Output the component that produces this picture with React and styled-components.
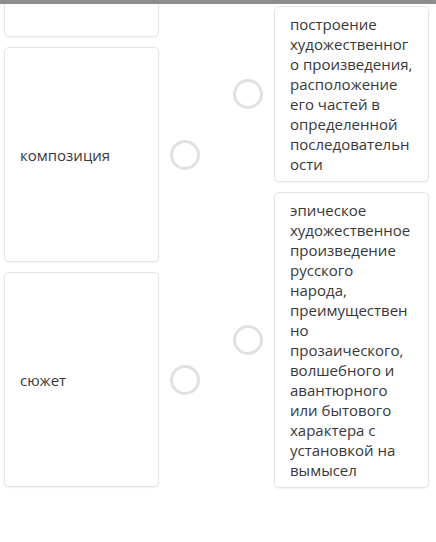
import React from "react";
import styled, { createGlobalStyle } from "styled-components";

const GlobalStyle = createGlobalStyle`
  html, body {
    margin: 0;
    padding: 0;
    background: #ffffff;
  }
  body {
    font-family: "Open Sans", "Noto Sans", sans-serif;
    -webkit-font-smoothing: antialiased;
  }
`;

const Page = styled.div`
  width: 436px;
  height: 542px;
  display: flex;
  flex-direction: column;
  overflow: hidden;
  background: #ffffff;
`;

const TopStrip = styled.div`
  height: 4px;
  flex: none;
  background: #8d8d8d;
`;

const Viewport = styled.div`
  flex: 1;
  overflow: hidden;
  display: grid;
  grid-template-columns: 210px 215px;
  align-items: start;
  padding-left: 4px;
`;

const Column = styled.div`
  display: flex;
  flex-direction: column;
  gap: ${(p) => p.$gap}px;
  margin-top: ${(p) => p.$offset}px;
`;

const Row = styled.div`
  display: flex;
  align-items: center;
  flex-direction: ${(p) => (p.$reverse ? "row-reverse" : "row")};
  justify-content: flex-start;
  gap: 11px;
`;

const Card = styled.div`
  box-sizing: border-box;
  width: ${(p) => p.$width}px;
  min-height: ${(p) => p.$minHeight || 0}px;
  padding: 7px 15px 7px 15px;
  border: 1px solid #e4e5e6;
  border-radius: 5px;
  box-shadow: 0 1px 2px rgba(0, 0, 0, 0.06);
  background: #ffffff;
  display: flex;
  align-items: center;
  color: #383838;
  font-size: 15px;
  line-height: 20px;
  overflow-wrap: anywhere;
  word-break: break-word;
`;

const Dot = styled.span`
  box-sizing: border-box;
  flex: none;
  width: 30px;
  height: 30px;
  border-radius: 50%;
  border: 3px solid #dfe1e2;
  background: #ffffff;
`;

const terms = [
  { id: "prev", text: "" },
  { id: "comp", text: "композиция" },
  { id: "plot", text: "сюжет" },
];

const definitions = [
  {
    id: "d1",
    text: "построение художественного произведения, расположение его частей в определенной последовательности",
  },
  {
    id: "d2",
    text: "эпическое художественное произведение русского народа, преимущественно прозаического, волшебного и авантюрного или бытового характера с установкой на вымысел",
  },
];

export default function App() {
  return (
    <Page>
      <GlobalStyle />
      <TopStrip />
      <Viewport>
        <Column $gap={10} $offset={-182}>
          {terms.map((t) => (
            <Row key={t.id}>
              <Card $width={155} $minHeight={215}>
                {t.text}
              </Card>
              {t.text && <Dot />}
            </Row>
          ))}
        </Column>
        <Column $gap={10} $offset={2}>
          {definitions.map((d) => (
            <Row key={d.id} $reverse>
              <Card $width={155}>{d.text}</Card>
              <Dot />
            </Row>
          ))}
        </Column>
      </Viewport>
    </Page>
  );
}
